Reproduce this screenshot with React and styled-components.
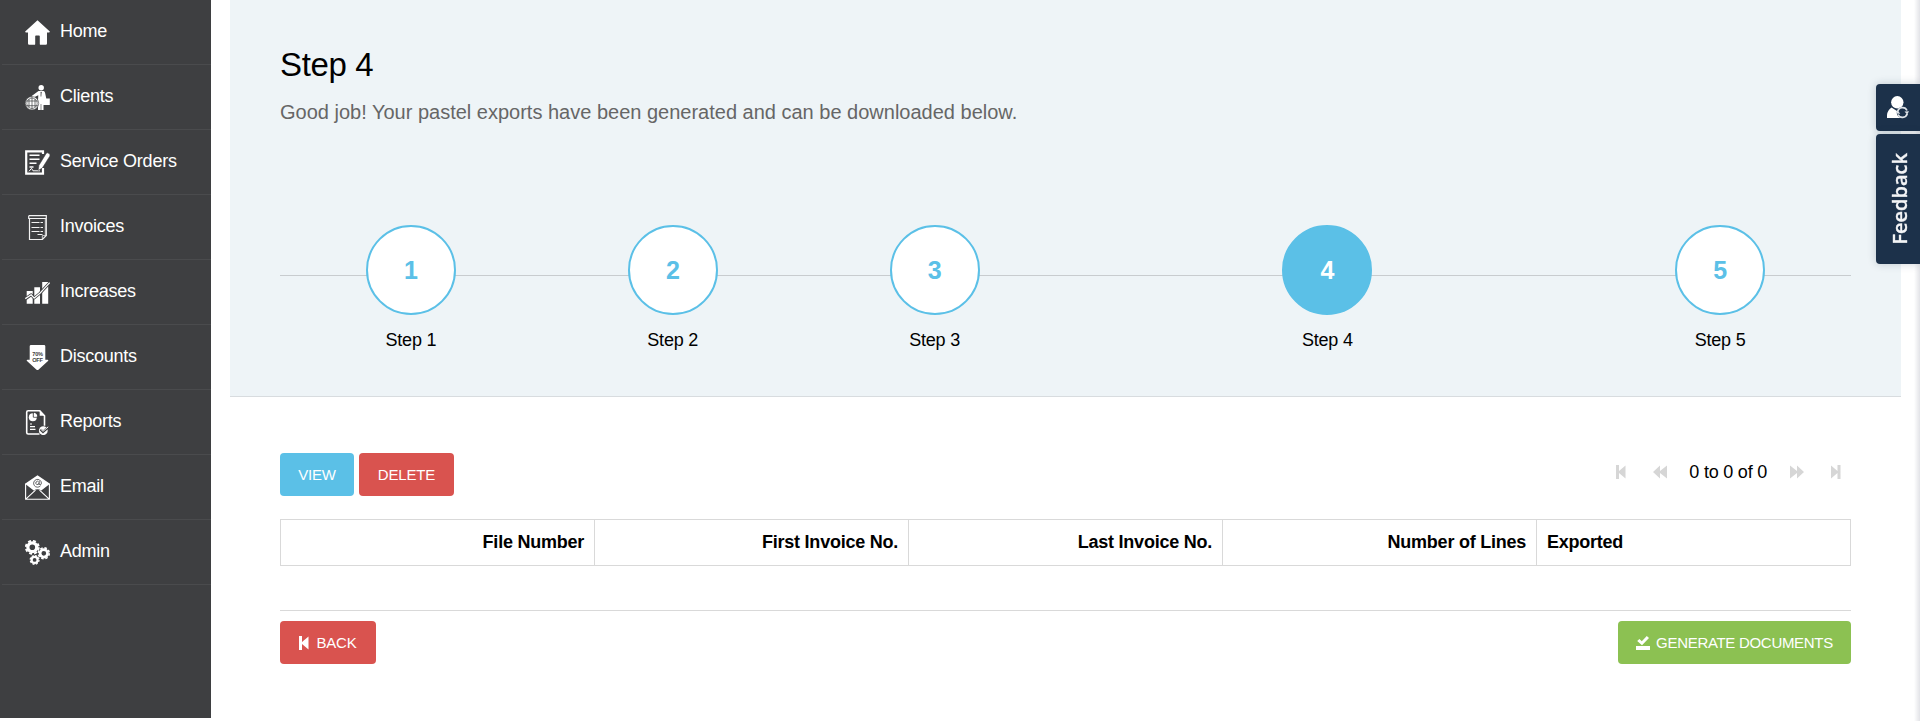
import React from 'react';
import styled, { createGlobalStyle } from 'styled-components';

const GlobalStyle = createGlobalStyle`
  *, *::before, *::after { box-sizing: border-box; }
  body {
    margin: 0;
    background: #fff;
    color: #000;
    font: 18px/26px "Liberation Sans", Arial, sans-serif;
    overflow: hidden;
  }
`;

const Page = styled.div`
  display: flex;
  height: 721px;
`;

const Sidebar = styled.nav`
  flex: 0 0 211px;
  height: 718px;
  background: #3e3f41;
`;

const NavItem = styled.a`
  display: flex;
  align-items: flex-start;
  height: 65px;
  margin-left: 2px;
  padding: 20px 0 0 23px;
  border-bottom: 1px solid #4a4b4d;
  color: #fff;
  letter-spacing: -0.24px;
  svg { flex: none; width: 25px; height: 25px; }
  span { margin: -2px 0 0 10px; }
`;

const Main = styled.main`
  flex: 1;
  margin: 0 19px;
`;

const Wizard = styled.section`
  height: 397px;
  padding: 45px 50px 0;
  background: #eef4f7;
  border-bottom: 1px solid #d8dcdf;
`;

const Title = styled.h1`
  margin: 0;
  font-size: 33px;
  line-height: 40px;
  font-weight: 400;
  letter-spacing: -0.35px;
`;

const Lead = styled.p`
  margin: 14px 0 0;
  font-size: 20px;
  color: #666;
`;

const Steps = styled.div`
  display: grid;
  grid-template-columns: 2fr 2fr 2fr 4fr 2fr;
  margin-top: 100px;
  background: linear-gradient(#c8cccf, #c8cccf) 0 50px / 100% 1px no-repeat;
`;

const Step = styled.div`
  display: flex;
  flex-direction: column;
  align-items: center;
  gap: 12px;
  letter-spacing: -0.2px;
`;

const Circle = styled.div`
  display: flex;
  align-items: center;
  justify-content: center;
  width: 90px;
  height: 90px;
  border: 2px solid #5bc0e7;
  border-radius: 50%;
  background: ${(p) => (p.$active ? '#5bc0e7' : '#fff')};
  color: ${(p) => (p.$active ? '#fff' : '#5bc0e7')};
  font-size: 25px;
  font-weight: 700;
`;

const Content = styled.section`
  padding: 56px 50px 0;
`;

const Bar = styled.div`
  display: flex;
  justify-content: space-between;
`;

const Group = styled.div`
  display: flex;
  gap: 5px;
`;

const Button = styled.button`
  display: flex;
  align-items: center;
  justify-content: center;
  gap: ${(p) => p.$gap || 0}px;
  width: ${(p) => p.$width}px;
  height: 43px;
  padding: 0;
  border: 0;
  border-radius: 4px;
  background: ${(p) => p.$color};
  color: #fff;
  font: 15px/22px "Liberation Sans", Arial, sans-serif;
  letter-spacing: ${(p) => p.$spacing || -0.15}px;
`;

const Pager = styled.div`
  display: flex;
  align-items: center;
  height: 38px;
  margin-right: 10px;
  color: #d6d6d6;
  span { margin: 0 23px 0 22px; color: #000; letter-spacing: -0.22px; }
`;

const PagerIcon = styled.svg`
  width: ${(p) => p.$w}px;
  height: 14px;
  margin-right: ${(p) => p.$after || 0}px;
`;

const Table = styled.div`
  display: grid;
  grid-template-columns: 313px repeat(3, 314px) 1fr;
  height: 47px;
  margin-top: 23px;
  border: 1px solid #d9d9d9;
`;

const Head = styled.div`
  padding: 9px 10px 0;
  font-weight: 700;
  letter-spacing: -0.24px;
  text-align: ${(p) => p.$align || 'right'};
  & + & { border-left: 1px solid #d9d9d9; }
`;

const Footer = styled(Bar)`
  margin-top: 44px;
  padding-top: 10px;
  border-top: 1px solid #d9d9d9;
`;

const SideTabs = styled.aside`
  position: fixed;
  top: 84px;
  right: 0;
  display: flex;
  flex-direction: column;
  gap: 3px;
`;

const Tab = styled.div`
  display: flex;
  align-items: center;
  justify-content: center;
  width: 44px;
  height: ${(p) => p.$height}px;
  border-radius: 4px 0 0 4px;
  background: #1c314a;
  box-shadow: 0 0 8px rgba(28, 49, 74, 0.22);
  color: #f3f4f6;
`;

const Vertical = styled.span`
  writing-mode: vertical-rl;
  transform: rotate(180deg);
  margin-left: 4px;
  font: 600 20px/28px "Open Sans", "Noto Sans", sans-serif;
  -webkit-text-stroke: 0.3px currentColor;
`;

const EdgeShade = styled.div`
  position: fixed;
  top: 0;
  right: 0;
  width: 6px;
  height: 100vh;
  background: linear-gradient(to right, rgba(224, 225, 230, 0), #e2e3e7);
`;

const HomeIcon = () => (
  <svg viewBox="0 0 25 25" fill="#fff">
    <path d="M12.5 0.3 0.2 11.4q-.3 1.2 1 1.2H3v11q0 1.2 1.2 1.2h5.2q.8 0 .8-.9v-7.6q0-.8.8-.8h3q.8 0 .8.8v7.6q0 .9.8.9h5.2q1.2 0 1.2-1.2v-11h1.8q1.3 0 1-1.2Z" />
  </svg>
);

const ClientsIcon = () => (
  <svg viewBox="0 0 25 25" fill="#fff">
    <circle cx="16.2" cy="2.7" r="2.7" />
    <path d="M13.5 6h5.2q1.2.4 1.4 2l1.2 5.500h3.500V20h-6.300v5h-2.200v-6h-.6v6H13v-9.500l.3-5.300L8 12.800 6.700 11Z" />
    <path d="m16 6.500.6.700-.3 4-.3.500-.4-.5.100-4Z" fill="#3e3f41" />
    <circle cx="7" cy="18.300" r="6.700" stroke="#3e3f41" strokeWidth=".6" />
    <circle cx="7" cy="18.300" r="5.200" fill="none" stroke="#3e3f41" strokeWidth=".6" />
    <path d="M7 12v12.500M4 14v8.500M10 14v8.500M1 16h12M1 20.700h12" stroke="#3e3f41" strokeWidth=".7" />
  </svg>
);

const OrdersIcon = () => (
  <svg viewBox="0 0 25 25" fill="none" stroke="#fff">
    <path d="M18 4V1.3H1.2v22.4H18V18" strokeWidth="2.200" />
    <path d="M4.500 5.200h10M4.500 9.300h10M4.500 13.300h7M4.500 17h4" strokeWidth="1.600" />
    <path d="m4 21.300 2.500-3 1.500 2.500h7" strokeWidth="1" />
    <path d="m13.200 20.500.8-5.300L21.200 3.400q1.300-1.100 2.800.1 1.500 1.200.7 2.800L17.300 18Z" fill="#fff" stroke="#3e3f41" strokeWidth=".5" />
  </svg>
);

const InvoicesIcon = () => (
  <svg viewBox="0 0 25 25" fill="none" stroke="#f2f2f2">
    <path d="M3.700.7h17.600v19.800l-4 4H4.500V3.500M3.700.7v2.800h17.600" strokeWidth="1.200" />
    <path d="M17.300 24.400v-3.800h4M20.300 4v16" strokeWidth=".8" />
    <path d="M6.500 7.500h8M15.500 7.500H18M6.500 12.500h8M15.500 12.500H18M6.500 16.500h8M15.500 16.500H18M12.500 19.500h5" strokeWidth="1.200" />
  </svg>
);

const IncreasesIcon = () => (
  <svg viewBox="0 0 25 25" fill="#fff">
    <path d="M1.700 11h6v12.700h-6ZM9.300 7.300H15v16.400H9.300ZM17.200 2h6v21.700h-6Z" />
    <g fill="none" strokeLinejoin="round">
      <path d="m.6 18.700 5.600-4 3 3.300 5.500-4.500L24.500 3" stroke="#3e3f41" strokeWidth="2.900" />
      <path d="m.3 18.700 5.800-4 3.100 3.400 5.400-4.500L24.700 2.600" stroke="#fff" strokeWidth="1.300" />
    </g>
  </svg>
);

const DiscountsIcon = () => (
  <svg viewBox="0 0 25 25" fill="#fff">
    <path d="M6 0h13Q20.300 0 20.300 1.300V14.800h2.200q1.400.2.500 1.200l-9.300 8.400q-1.200 1-2.400 0L2 16q-.9-1 .5-1.200h2.200V1.300Q4.700 0 6 0Z" />
    <g fill="#3e3f41" fontFamily="Liberation Sans" fontWeight="700" fontSize="5.600" textAnchor="middle">
      <text x="12.500" y="11" textLength="10.500" lengthAdjust="spacingAndGlyphs">70%</text>
      <text x="12.500" y="16.700" textLength="10.500" lengthAdjust="spacingAndGlyphs">OFF</text>
    </g>
  </svg>
);

const ReportsIcon = () => (
  <svg viewBox="0 0 25 25" fill="none" stroke="#fff">
    <path d="M14.500 24H3.200Q1.700 24 1.700 22.500V2.300Q1.700.8 3.200.8h11.500l4.800 5v10" strokeWidth="1.600" />
    <path d="M14.700 0v5.800h5.300Z" fill="#fff" stroke="none" />
    <circle cx="7.800" cy="7.300" r="4" fill="#fff" stroke="none" />
    <path d="M8.300 2.500v4.700h4.500" stroke="#3e3f41" strokeWidth=".9" />
    <path d="M9 2.700a4 4 0 0 1 3.300 3.700H9Z" fill="#fff" stroke="none" />
    <path d="M5 14h2M5 16.700h5M5 19.300h5.500" strokeWidth="1.200" />
    <circle cx="18.300" cy="20.700" r="4.400" fill="#fff" stroke="none" />
    <path d="m15.500 19.500 2.500 2.400 5.700-5" stroke="#3e3f41" strokeWidth="2.400" />
    <path d="m16 19.400 2 1.900 5.200-4.500" strokeWidth="1" />
  </svg>
);

const EmailIcon = () => (
  <svg viewBox="0 0 25 25" fill="none" stroke="#fff">
    <path d="M.6 8.800v15.500h23.800V8.800M.8 24.200l9.700-9M24.200 24.200l-9.700-9" strokeWidth="1.100" />
    <path d="M12.500.3 25 8.700l-8.700 6.700q-3.800-2.200-7.600 0L0 8.700Z" fill="#fff" stroke="none" />
    <path d="M15.500 10.800a3.900 3.900 0 1 1 .9-2.800q0 1.800-1.300 1.800t-1-1.600l.3-2M14 8a1.600 1.600 0 1 1-.3-1" stroke="#3e3f41" strokeWidth=".8" />
  </svg>
);

const Gear = ({ x, y, r }) => (
  <g fill="none" stroke="#fff">
    <circle cx={x} cy={y} r={r * 0.6} strokeWidth={r * 0.44} />
    <circle cx={x} cy={y} r={r * 0.88} strokeWidth={r * 0.25} strokeDasharray={`${r * 0.4} ${r * 0.291}`} />
  </g>
);

const AdminIcon = () => (
  <svg viewBox="0 0 25 25">
    <Gear x={7.3} y={7.3} r={7.4} />
    <Gear x={18.8} y={13.3} r={6.2} />
    <Gear x={9.6} y={19.9} r={5} />
  </svg>
);

const ICON_PATHS = {
  first: 'M0 0h3v6l6.500-5.500v13L3 8v6H0Z',
  rewind: 'M7 0.500V6L14 .5v13L7 8v5.500L0 7Z',
  forward: 'M0 .5 7 6V.5L14 7 7 13.500V8l-7 5.500Z',
  last: 'M0 .5 6.500 6V0h3v14h-3V8L0 13.500Z',
};

const Seek = ({ kind, after }) => {
  const w = kind === 'first' || kind === 'last' ? 10 : 14;
  return (
    <PagerIcon viewBox={`0 0 ${w} 14`} fill="currentColor" $w={w} $after={after}>
      <path d={ICON_PATHS[kind]} />
    </PagerIcon>
  );
};

const SavedIcon = () => (
  <svg width="14" height="14" viewBox="0 0 14 14" fill="#fff">
    <path d="M0 10h14v4H0ZM1.200 5 3.400 3l2.400 2.300L10.800 0 13 1.900 6 9.300Z" />
  </svg>
);

const UserSyncIcon = () => (
  <svg width="22" height="23" viewBox="0 0 22 23">
    <circle cx="10.300" cy="6.300" r="6.200" fill="#fff" />
    <path d="M0 22v-3q.5-5 4.500-7.500l5.500 3.500 4-2.500v9.500Z" fill="#fff" />
    <circle cx="15.500" cy="16.500" r="5.800" fill="#1c314a" />
    <g fill="none" stroke="#dfe3e8" strokeWidth="1.700">
      <path d="M20 14.500a4.900 4.900 0 0 0-9.300 1.200M11 18.500a4.900 4.900 0 0 0 9.200-.7" />
    </g>
    <path d="m17.500 15.500 4.500-.3-1.800 3.300ZM8.800 17.500l4.500.3-2.800-3.500Z" fill="#dfe3e8" />
  </svg>
);

const NAV = [
  ['Home', HomeIcon],
  ['Clients', ClientsIcon],
  ['Service Orders', OrdersIcon],
  ['Invoices', InvoicesIcon],
  ['Increases', IncreasesIcon],
  ['Discounts', DiscountsIcon],
  ['Reports', ReportsIcon],
  ['Email', EmailIcon],
  ['Admin', AdminIcon],
];

export default function App() {
  return (
    <Page>
      <GlobalStyle />
      <Sidebar>
        {NAV.map(([label, Icon]) => (
          <NavItem key={label}>
            <Icon />
            <span>{label}</span>
          </NavItem>
        ))}
      </Sidebar>
      <Main>
        <Wizard>
          <Title>Step 4</Title>
          <Lead>Good job! Your pastel exports have been generated and can be downloaded below.</Lead>
          <Steps>
            {[1, 2, 3, 4, 5].map((n) => (
              <Step key={n}>
                <Circle $active={n === 4}>{n}</Circle>
                <span>Step {n}</span>
              </Step>
            ))}
          </Steps>
        </Wizard>
        <Content>
          <Bar>
            <Group>
              <Button $width={74} $color="#5bc0e7">VIEW</Button>
              <Button $width={95} $color="#d9534f">DELETE</Button>
            </Group>
            <Pager>
              <Seek kind="first" after={27} />
              <Seek kind="rewind" />
              <span>0 to 0 of 0</span>
              <Seek kind="forward" after={27} />
              <Seek kind="last" />
            </Pager>
          </Bar>
          <Table>
            <Head>File Number</Head>
            <Head>First Invoice No.</Head>
            <Head>Last Invoice No.</Head>
            <Head>Number of Lines</Head>
            <Head $align="left">Exported</Head>
          </Table>
          <Footer>
            <Button $width={96} $gap={7} $color="#d9534f">
              <Seek kind="first" />
              BACK
            </Button>
            <Button $width={233} $gap={6} $spacing={-0.3} $color="#8cc152">
              <SavedIcon />
              GENERATE DOCUMENTS
            </Button>
          </Footer>
        </Content>
      </Main>
      <EdgeShade />
      <SideTabs>
        <Tab $height={47}><UserSyncIcon /></Tab>
        <Tab $height={130}><Vertical>Feedback</Vertical></Tab>
      </SideTabs>
    </Page>
  );
}
